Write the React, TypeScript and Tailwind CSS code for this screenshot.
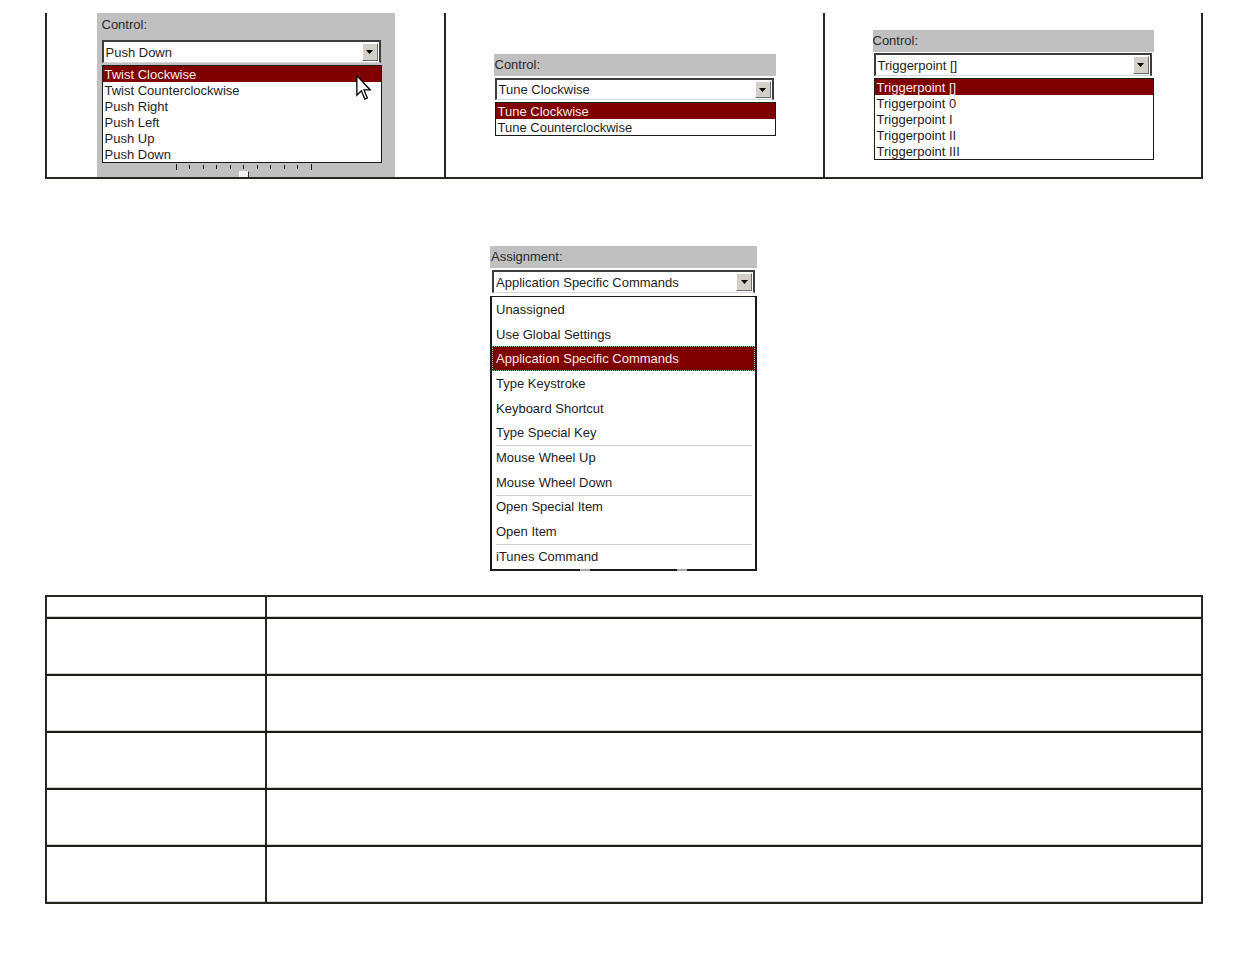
import React from "react";

const FONT = { fontFamily: '"Liberation Sans", Arial, sans-serif' };

function Arrow() {
  return (
    <svg width="7" height="4" viewBox="0 0 7 4" className="block">
      <path d="M0 0 H7 L3.5 4 Z" fill="#000" />
    </svg>
  );
}

function Combo({ text, w, h = 23 }: { text: string; w: string; h?: number }) {
  return (
    <div
      className={`${w} flex items-stretch bg-white border-t-2 border-l-2 border-r-2 border-b border-t-[#3c3c3c] border-l-[#3c3c3c] border-r-[#3c3c3c] border-b-[#d8d8d8]`}
      style={{ height: h }}
    >
      <div className="flex-1 flex items-center pl-[2px] text-[13px] text-[#1e1e1e] leading-none">{text}</div>
      <div className="w-[16px] my-[1px] mr-[1px] flex items-center justify-center bg-[#d4d0c8] border-t border-l border-t-white border-l-white border-b border-r border-b-[#6e6e6e] border-r-[#6e6e6e]">
        <Arrow />
      </div>
    </div>
  );
}

function SmallList({ items, sel, w }: { items: string[]; sel: number; w: string }) {
  return (
    <div className={`${w} bg-white border border-[#1a1a1a]`}>
      {items.map((t, i) => (
        <div
          key={i}
          className={`h-[16px] flex items-center pl-[2px] text-[13px] leading-none whitespace-nowrap ${
            i === sel ? "bg-[#800000] text-[#f4eaea]" : "text-[#1e1e1e]"
          }`}
        >
          {t}
        </div>
      ))}
    </div>
  );
}

function Cursor() {
  return (
    <svg width="16" height="26" viewBox="0 0 12 20" className="absolute left-[259px] top-[62px]">
      <path d="M0.5 0.5 L0.5 15.5 L4 12.2 L6.6 18.5 L8.6 17.6 L6 11.5 L10.8 11.5 Z" fill="#fff" stroke="#000" strokeWidth="1" strokeLinejoin="miter" />
    </svg>
  );
}

export default function App() {
  const ticks = [0, 1, 2, 3, 4, 5, 6, 7, 8, 9, 10];
  const assign = [
    "Unassigned",
    "Use Global Settings",
    "Application Specific Commands",
    "Type Keystroke",
    "Keyboard Shortcut",
    "Type Special Key",
    "Mouse Wheel Up",
    "Mouse Wheel Down",
    "Open Special Item",
    "Open Item",
    "iTunes Command",
  ];
  const sepAfter = [5, 7, 9];
  return (
    <div className="w-[1235px] h-[954px] bg-white overflow-hidden" style={FONT}>
      {/* top table */}
      <div className="ml-[45px] mt-[13px] w-[1158px] h-[166px] flex border-l-2 border-r-2 border-b-2 border-[#26261e]">
        {/* cell 1 */}
        <div className="w-[399px] border-r-2 border-[#26261e] flex justify-center">
          <div className="relative w-[298px] h-full bg-[#c0c0c0] pl-[5px]">
            <div className="h-[27px] pt-[4px] text-[13px] leading-[16px] text-[#2a2a2a]">Control:</div>
            <Combo text="Push Down" w="w-[279px]" />
            <div className="mt-[2px]">
              <SmallList
                w="w-[280px]"
                sel={0}
                items={["Twist Clockwise", "Twist Counterclockwise", "Push Right", "Push Left", "Push Up", "Push Down"]}
              />
            </div>
            <div className="relative h-[14px]">
              {ticks.map((t) => (
                <div
                  key={t}
                  className={`absolute w-[1px] bg-[#1a1a1a] ${t === 0 || t === 10 ? "top-[1px] h-[6px]" : "top-[2px] h-[4px]"}`}
                  style={{ left: 74 + t * 13.5 }}
                />
              ))}
              <div className="absolute left-[137px] top-[8px] w-[10px] h-[6px] bg-[#f4f4f4] border-t border-l border-white border-r border-r-[#303030]" />
            </div>
            <Cursor />
          </div>
        </div>
        {/* cell 2 */}
        <div className="w-[379px] border-r-2 border-[#26261e] flex items-center justify-center">
          <div className="w-[282px]">
            <div className="h-[22px] bg-[#c0c0c0] flex items-center text-[13px] text-[#2a2a2a] pl-[1px]">Control:</div>
            <div className="mt-[2px] pl-[1px]">
              <Combo text="Tune Clockwise" w="w-[279px]" h={22} />
            </div>
            <div className="mt-[2px] pl-[1px]">
              <SmallList w="w-[281px]" sel={0} items={["Tune Clockwise", "Tune Counterclockwise"]} />
            </div>
          </div>
        </div>
        {/* cell 3 */}
        <div className="flex-1 flex items-center justify-center">
          <div className="w-[281px]">
            <div className="h-[22px] bg-[#c0c0c0] flex items-center text-[13px] text-[#2a2a2a]">Control:</div>
            <div className="mt-[1px] pl-[1px]">
              <Combo text="Triggerpoint []" w="w-[278px]" />
            </div>
            <div className="mt-[2px] pl-[1px]">
              <SmallList
                w="w-[280px]"
                sel={0}
                items={["Triggerpoint []", "Triggerpoint 0", "Triggerpoint I", "Triggerpoint II", "Triggerpoint III"]}
              />
            </div>
          </div>
        </div>
      </div>

      {/* assignment */}
      <div className="ml-[490px] mt-[67px] w-[267px]">
        <div className="h-[22px] bg-[#c0c0c0] flex items-center text-[13px] text-[#2a2a2a] pl-[1px]">Assignment:</div>
        <div className="mt-[2px] ml-[2px]">
          <Combo text="Application Specific Commands" w="w-[263px]" />
        </div>
        <div className="relative mt-[3px] w-[267px] bg-white border-2 border-[#1a1a1a] border-t">
          {assign.map((t, i) => (
            <div key={i} className="relative">
              <div
                className={`h-[24.7px] flex items-center pl-[4px] text-[13px] leading-none whitespace-nowrap ${
                  i === 2
                    ? "bg-[#800000] text-[#f4eaea] outline-1 outline-dotted outline-[#7fc4c4] -outline-offset-1"
                    : "text-[#1e1e1e]"
                }`}
              >
                {t}
              </div>
              {sepAfter.includes(i) && <div className="absolute left-[4px] right-[3px] bottom-[-1px] h-[1px] bg-[#cfcfcf]" />}
            </div>
          ))}
          <div className="absolute left-[88px] bottom-[-2px] w-[10px] h-[2px] bg-[#a8a8a8]" />
          <div className="absolute left-[185px] bottom-[-2px] w-[10px] h-[2px] bg-[#a8a8a8]" />
        </div>
      </div>

      {/* bottom table */}
      <div className="ml-[45px] mt-[24px] w-[1158px] border-2 border-[#26261e]">
        {[20, 55, 55, 55, 55, 55].map((h, i) => (
          <div
            key={i}
            className={`flex ${i > 0 ? "border-t-2 border-[#1c1c12]" : ""}`}
            style={{ height: h + (i > 0 ? 2 : 0) }}
          >
            <div className="w-[220px] border-r-2 border-[#26261e] shadow-[inset_0_-1px_0_#cfcfcf]" />
            <div className="flex-1 shadow-[inset_0_-1px_0_#cfcfcf]" />
          </div>
        ))}
      </div>
    </div>
  );
}
